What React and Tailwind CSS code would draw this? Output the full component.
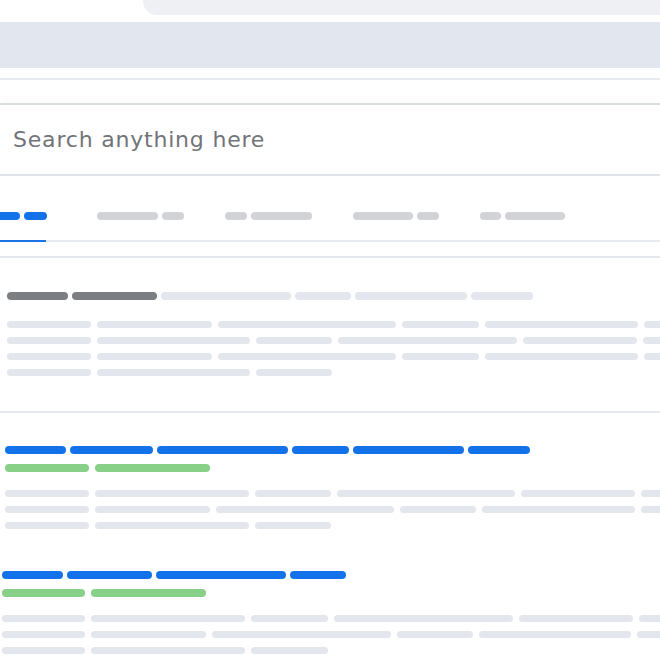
const GREY = 'bg-[#e3e6ec]'

const TABS = [
  { pills: [24, 23], active: true, ml: -4 },
  { pills: [61, 22], ml: 50 },
  { pills: [22, 61], ml: 41 },
  { pills: [60, 22], ml: 41 },
  { pills: [21, 60], ml: 41 },
]

const SECTIONS = [
  {
    left: 7,
    title: [[61, 'dark'], [85, 'dark'], [130, 'light'], [56, 'light'], [112, 'light'], [62, 'light']],
    rows: [
      [84, 115, 178, 77, 153, 200],
      [84, 153, 76, 179, 114, 200],
      [84, 115, 178, 77, 153, 200],
      [84, 153, 76],
    ],
  },
  {
    left: 5,
    title: [[61, 'blue'], [83, 'blue'], [131, 'blue'], [57, 'blue'], [111, 'blue'], [62, 'blue']],
    url: [84, 115],
    rows: [
      [84, 154, 76, 178, 114, 200],
      [84, 115, 178, 76, 153, 200],
      [84, 154, 76],
    ],
  },
  {
    left: 2,
    title: [[61, 'blue'], [85, 'blue'], [130, 'blue'], [56, 'blue']],
    url: [83, 115],
    rows: [
      [83, 154, 77, 179, 114, 200],
      [83, 115, 179, 76, 152, 200],
      [83, 154, 77],
    ],
  },
]

const TITLE_COLOR = {
  dark: 'bg-[#7b7f84]',
  light: GREY,
  blue: 'bg-[#1372ea]',
}

export default function App() {
  return (
    <div className="w-[660px] h-[660px] overflow-hidden bg-white" style={{ fontFamily: '"DejaVu Sans", Lato, sans-serif' }}>
      <div className="h-[15px] ml-[143px] bg-[#eef0f3] rounded-bl-[14px]" />
      <div className="mt-[7px] h-[46px] bg-[#e2e6ee]" />
      <div className="mt-[10px] h-[2px] bg-[#e7eaef]" />

      <div className="mt-[23px] h-[73px] border-t-2 border-b-2 border-t-[#d9dedf] border-b-[#dfe3e8] flex items-center pl-[13px] shadow-[0_-4px_6px_rgba(0,0,0,0.02)]">
        <span className="text-[22px] text-[#707479] tracking-[0.8px]">Search anything here</span>
      </div>

      <div className="pt-[36px]">
        <div className="flex h-[8px]">
          {TABS.map((t, i) => (
            <div key={i} className="flex gap-[4px]" style={{ marginLeft: t.ml }}>
              {t.pills.map((w, j) => (
                <div key={j} className={`h-[8px] rounded-full ${t.active ? 'bg-[#1372ea]' : 'bg-[#d1d3d6]'}`} style={{ width: w }} />
              ))}
            </div>
          ))}
        </div>
        <div className="mt-[20px] h-[2px] bg-[#e8ebf0]">
          <div className="w-[46px] h-full bg-[#1a74e8]" />
        </div>
        <div className="mt-[14px] h-[2px] bg-[#e4e7ec]" />
      </div>

      {SECTIONS.map((s, i) => (
        <div key={i}>
          {i === 1 && <div className="mt-[35px] h-[2px] bg-[#e6e9ee]" />}
          <div className={i === 0 ? 'mt-[34px]' : i === 1 ? 'mt-[33px]' : 'mt-[42px]'} style={{ paddingLeft: s.left }}>
            <div className="flex gap-[4px]">
              {s.title.map(([w, c], j) => (
                <div key={j} className={`h-[8px] rounded-full shrink-0 ${TITLE_COLOR[c]}`} style={{ width: w }} />
              ))}
            </div>
            {s.url && (
              <div className="mt-[10px] flex gap-[6px]">
                {s.url.map((w, j) => (
                  <div key={j} className="h-[8px] rounded-full shrink-0 bg-[#88d088]" style={{ width: w }} />
                ))}
              </div>
            )}
            <div className={`${s.url ? 'mt-[18px]' : 'mt-[21px]'} flex flex-col gap-[9px]`}>
              {s.rows.map((r, k) => (
                <div key={k} className="flex gap-[6px]">
                  {r.map((w, j) => (
                    <div key={j} className={`h-[7px] rounded-full shrink-0 ${GREY}`} style={{ width: w }} />
                  ))}
                </div>
              ))}
            </div>
          </div>
        </div>
      ))}
    </div>
  )
}
